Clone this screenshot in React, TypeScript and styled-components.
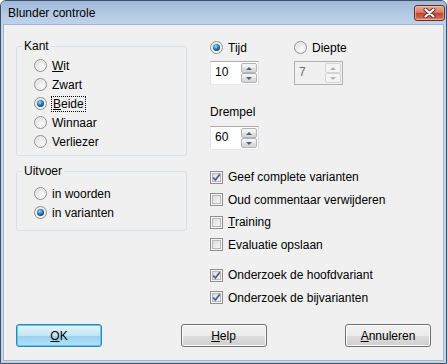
import React from "react";
import styled, { createGlobalStyle } from "styled-components";

const GlobalStyle = createGlobalStyle`
  html, body {
    margin: 0;
    padding: 0;
    background: #ffffff;
  }
  body {
    font-family: "Liberation Sans", Arial, sans-serif;
    font-size: 12px;
    color: #000;
  }
`;

const Window = styled.div`
  width: 447px;
  height: 364px;
  box-sizing: border-box;
  display: flex;
  flex-direction: column;
  border: 1px solid #3e516b;
  border-radius: 6px 6px 0 0;
  background: #c1d4ea;
  overflow: hidden;
`;

const TitleBar = styled.div`
  height: 23px;
  display: flex;
  align-items: flex-start;
  justify-content: space-between;
  padding: 0 1px 0 7px;
  background: linear-gradient(#a0b9d9, #b4cbe5 60%, #bed2ea);
`;

const Title = styled.span`
  line-height: 24px;
  font-size: 12px;
`;

const CloseButton = styled.div`
  margin-top: 4px;
  width: 31px;
  height: 16px;
  box-sizing: border-box;
  border: 1px solid #6a2a22;
  border-radius: 3px;
  display: flex;
  align-items: center;
  justify-content: center;
  background: linear-gradient(#e9a995 0%, #d97f67 45%, #c2452c 52%, #cf6a4e 85%, #e2937b 100%);
  box-shadow: inset 0 0 0 1px rgba(255, 220, 210, 0.45);
`;

const Client = styled.div`
  flex: 1;
  margin: 0 2px 2px;
  border: 1px solid #a4b7cf;
  background: #f0f0f0;
  display: flex;
  flex-direction: column;
  padding: 13px 12px 13px 12px;
`;

const Body = styled.div`
  display: grid;
  grid-template-columns: 171px 1fr;
  column-gap: 23px;
  align-items: start;
`;

const LeftColumn = styled.div`
  display: flex;
  flex-direction: column;
  gap: 8px;
  padding-top: 1px;
`;

const GroupBox = styled.fieldset`
  margin: 0;
  padding: 0;
  border: 1px solid #d5dfe5;
  border-radius: 3px;
  min-inline-size: 0;
`;

const Legend = styled.legend`
  margin-left: 5px;
  padding: 0 2px;
  line-height: 14px;
  font-size: 12px;
`;

const OptionList = styled.div<{ $padTop: number; $padBottom: number }>`
  display: flex;
  flex-direction: column;
  padding: ${(p) => p.$padTop}px 0 ${(p) => p.$padBottom}px 17px;
`;

const OptionRow = styled.label<{ $height?: number }>`
  display: flex;
  align-items: center;
  gap: 5px;
  height: ${(p) => p.$height ?? 19}px;
  white-space: nowrap;
`;

const Radio = styled.span<{ $checked?: boolean }>`
  position: relative;
  width: 13px;
  height: 13px;
  flex: none;
  box-sizing: border-box;
  border-radius: 50%;
  border: 1px solid #8c8e8f;
  background: radial-gradient(circle at 65% 70%, #fbfbfb 0%, #eeeeee 40%, #cfcfcf 100%);
  box-shadow: inset 0 0 0 1px #f4f4f4;

  &::after {
    content: "";
    display: ${(p) => (p.$checked ? "block" : "none")};
    position: absolute;
    left: 2px;
    top: 2px;
    width: 7px;
    height: 7px;
    border-radius: 50%;
    background: radial-gradient(circle at 40% 35%, #b0e2fb 0%, #3d96d4 30%, #125690 62%, #0a2b55 100%);
  }
`;

const CheckBox = styled.span`
  width: 13px;
  height: 13px;
  flex: none;
  box-sizing: border-box;
  border: 1px solid #8e8f8f;
  background: linear-gradient(135deg, #d2d2d2 0%, #ececec 55%, #fbfbfb 100%);
  box-shadow: inset 0 0 0 1px #f4f4f4, inset 0 0 0 2px #b8b8b8;
  display: flex;
  align-items: center;
  justify-content: center;
`;

const Key = styled.u`
  text-decoration: underline;
  text-underline-offset: 1px;
`;

const Focus = styled.span`
  outline: 1px dotted #000;
  outline-offset: 0;
  padding: 0 1px;
  line-height: 14px;
`;

const RightColumn = styled.div`
  display: flex;
  flex-direction: column;
`;

const ModeGrid = styled.div`
  display: grid;
  grid-template-columns: 84px 84px;
  row-gap: 4px;
`;

const SpinBox = styled.div<{ $disabled?: boolean }>`
  width: 49px;
  height: 24px;
  box-sizing: border-box;
  display: flex;
  border: 1px solid;
  border-color: ${(p) =>
    p.$disabled ? "#adb2b5" : "#abadb3 #dbdfe6 #e3e9ef #e2e3ea"};
  background: ${(p) => (p.$disabled ? "#f0f0f0" : "#ffffff")};
  color: ${(p) => (p.$disabled ? "#6d6d6d" : "#000")};
`;

const SpinValue = styled.span`
  flex: 1;
  padding-left: 4px;
  line-height: 21px;
`;

const SpinArrows = styled.div`
  width: 16px;
  display: flex;
  flex-direction: column;
  padding: 1px 1px 1px 0;
`;

const SpinButton = styled.div<{ $down?: boolean; $disabled?: boolean }>`
  flex: 1;
  box-sizing: border-box;
  border: 1px solid ${(p) => (p.$disabled ? "#d5d5d5" : "#b3b3b3")};
  border-radius: 2px;
  background: ${(p) =>
    p.$disabled
      ? "#f4f4f4"
      : "linear-gradient(#f6f6f6 0%, #ebebeb 50%, #dedede 51%, #d6d6d6 100%)"};
  display: flex;
  align-items: center;
  justify-content: center;

  &::before {
    content: "";
    width: 0;
    height: 0;
    border-left: 3px solid transparent;
    border-right: 3px solid transparent;
    ${(p) =>
      p.$down
        ? `border-top: 3px solid ${p.$disabled ? "#b0b0b0" : "#4d6185"};`
        : `border-bottom: 3px solid ${p.$disabled ? "#b0b0b0" : "#4d6185"};`}
  }
`;

const FieldLabel = styled.div`
  margin-top: 20px;
  line-height: 14px;
  margin-bottom: 7px;
`;

const CheckList = styled.div<{ $top: number }>`
  margin-top: ${(p) => p.$top}px;
  display: flex;
  flex-direction: column;
`;

const ButtonRow = styled.div`
  margin-top: auto;
  display: flex;
  justify-content: space-between;
`;

const PushButton = styled.button<{ $default?: boolean }>`
  width: 86px;
  height: 23px;
  box-sizing: border-box;
  padding: 0;
  font-family: inherit;
  font-size: 12px;
  color: #000;
  border-radius: 3px;
  border: 1px solid ${(p) => (p.$default ? "#3c7fb1" : "#707070")};
  background: ${(p) =>
    p.$default
      ? "linear-gradient(#e5f4fc 0%, #c4e5f6 50%, #98d1ef 51%, #b6e0f5 100%)"
      : "linear-gradient(#f2f2f2 0%, #ebebeb 50%, #dddddd 51%, #cfcfcf 100%)"};
  box-shadow: ${(p) =>
    p.$default ? "inset 0 0 0 1px #48d2f8" : "inset 0 0 0 1px #fcfcfc"};
`;

const CloseGlyph = () => (
  <svg width="13" height="10" viewBox="0 0 13 10">
    <path d="M2.5 1.5 L10.5 8.5 M10.5 1.5 L2.5 8.5" stroke="#5b2b26" strokeWidth="4" strokeLinecap="round" />
    <path d="M2.5 1.5 L10.5 8.5 M10.5 1.5 L2.5 8.5" stroke="#ffffff" strokeWidth="2.2" strokeLinecap="round" />
  </svg>
);

const Check = () => (
  <svg width="9" height="9" viewBox="0 0 9 9">
    <path d="M1.2 4.6 L3.4 7 L7.8 1.4" fill="none" stroke="#4a5f97" strokeWidth="1.7" />
  </svg>
);

const Spin: React.FC<{ value: string; disabled?: boolean }> = ({ value, disabled }) => (
  <SpinBox $disabled={disabled}>
    <SpinValue>{value}</SpinValue>
    <SpinArrows>
      <SpinButton $disabled={disabled} />
      <SpinButton $down $disabled={disabled} />
    </SpinArrows>
  </SpinBox>
);

const CheckRow: React.FC<{ checked?: boolean; children: React.ReactNode }> = ({ checked, children }) => (
  <OptionRow $height={22.5}>
    <CheckBox>{checked && <Check />}</CheckBox>
    <span>{children}</span>
  </OptionRow>
);

const App: React.FC = () => {
  return (
    <>
      <GlobalStyle />
      <Window>
        <TitleBar>
          <Title>Blunder controle</Title>
          <CloseButton>
            <CloseGlyph />
          </CloseButton>
        </TitleBar>
        <Client>
          <Body>
            <LeftColumn>
              <GroupBox>
                <Legend>Kant</Legend>
                <OptionList $padTop={3} $padBottom={4}>
                  <OptionRow>
                    <Radio />
                    <span>
                      <Key>W</Key>it
                    </span>
                  </OptionRow>
                  <OptionRow>
                    <Radio />
                    <span>Zwart</span>
                  </OptionRow>
                  <OptionRow>
                    <Radio $checked />
                    <Focus>
                      <Key>B</Key>eide
                    </Focus>
                  </OptionRow>
                  <OptionRow>
                    <Radio />
                    <span>Winnaar</span>
                  </OptionRow>
                  <OptionRow>
                    <Radio />
                    <span>Verliezer</span>
                  </OptionRow>
                </OptionList>
              </GroupBox>
              <GroupBox>
                <Legend>Uitvoer</Legend>
                <OptionList $padTop={6} $padBottom={8}>
                  <OptionRow>
                    <Radio />
                    <span>in woorden</span>
                  </OptionRow>
                  <OptionRow>
                    <Radio $checked />
                    <span>in varianten</span>
                  </OptionRow>
                </OptionList>
              </GroupBox>
            </LeftColumn>
            <RightColumn>
              <ModeGrid>
                <OptionRow>
                  <Radio $checked />
                  <span>Tijd</span>
                </OptionRow>
                <OptionRow>
                  <Radio />
                  <span>Diepte</span>
                </OptionRow>
                <Spin value="10" />
                <Spin value="7" disabled />
              </ModeGrid>
              <FieldLabel>Drempel</FieldLabel>
              <Spin value="60" />
              <CheckList $top={16}>
                <CheckRow checked>Geef complete varianten</CheckRow>
                <CheckRow>Oud commentaar verwijderen</CheckRow>
                <CheckRow>
                  <Key>T</Key>raining
                </CheckRow>
                <CheckRow>Evaluatie opslaan</CheckRow>
              </CheckList>
              <CheckList $top={8}>
                <CheckRow checked>Onderzoek de hoofdvariant</CheckRow>
                <CheckRow checked>Onderzoek de bijvarianten</CheckRow>
              </CheckList>
            </RightColumn>
          </Body>
          <ButtonRow>
            <PushButton $default>
              <Key>O</Key>K
            </PushButton>
            <PushButton>
              <Key>H</Key>elp
            </PushButton>
            <PushButton>
              <Key>A</Key>nnuleren
            </PushButton>
          </ButtonRow>
        </Client>
      </Window>
    </>
  );
};

export default App;
